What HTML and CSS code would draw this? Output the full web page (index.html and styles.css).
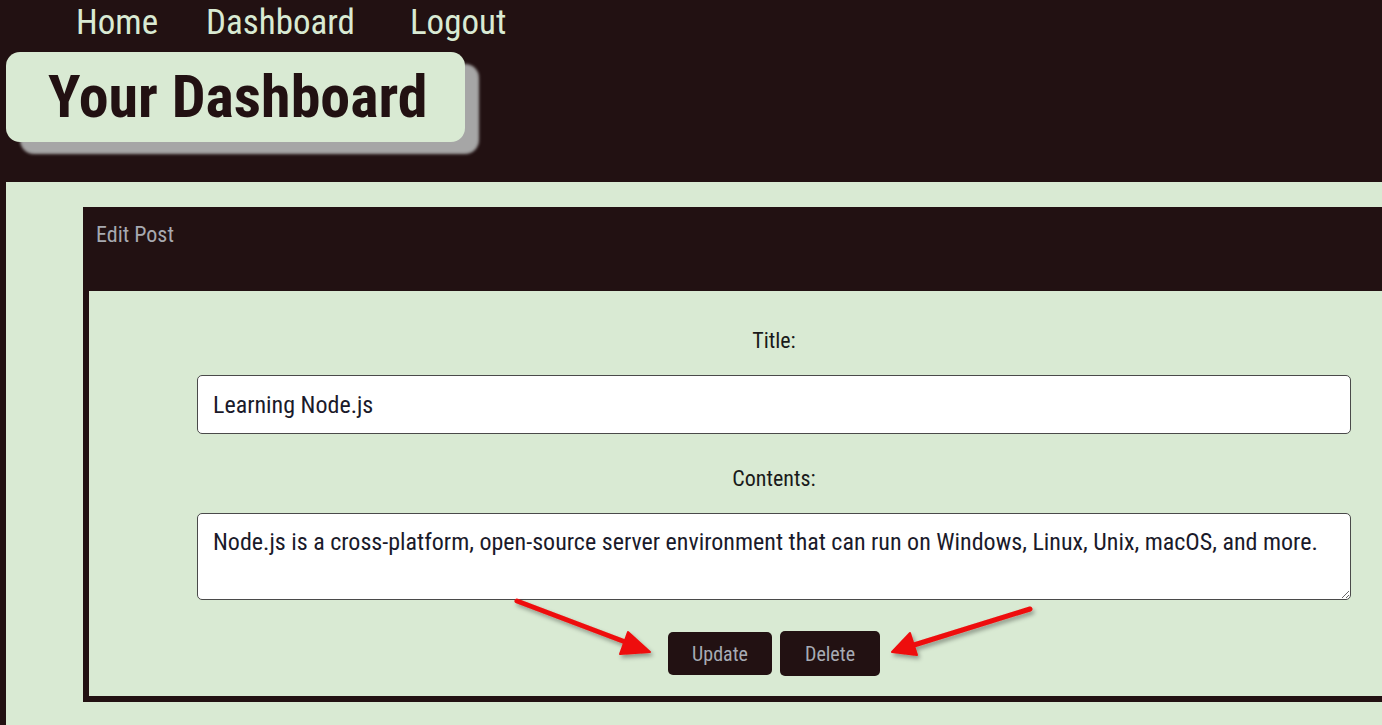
FILE: index.html
```html
<!DOCTYPE html>
<html lang="en">
<head>
<meta charset="utf-8">
<title>Your Dashboard</title>
<link rel="stylesheet" href="styles.css">
</head>
<body>
<header class="site-header">
  <nav class="nav">
    <a class="nav-link" href="#">Home</a>
    <a class="nav-link" href="#">Dashboard</a>
    <a class="nav-link nav-link-logout" href="#">Logout</a>
  </nav>
  <div class="title-box">
    <h1 class="page-title">Your Dashboard</h1>
  </div>
</header>
<main class="main">
  <section class="card">
    <div class="card-header">Edit Post</div>
    <form class="card-body">
      <label class="field-label" for="title">Title:</label>
      <input class="field-input" id="title" type="text" value="Learning Node.js">
      <label class="field-label field-label-contents" for="contents">Contents:</label>
      <textarea class="field-textarea" id="contents">Node.js is a cross-platform, open-source server environment that can run on Windows, Linux, Unix, macOS, and more.</textarea>
      <div class="actions">
        <button class="btn" type="button">Update</button>
        <button class="btn btn-delete" type="button">Delete</button>
      </div>
    </form>
  </section>
</main>
<svg class="annotations" width="1382" height="725" viewBox="0 0 1382 725">
  <defs>
    <filter id="sh" x="-20%" y="-20%" width="140%" height="140%">
      <feDropShadow dx="2" dy="3" stdDeviation="2" flood-color="#000" flood-opacity="0.35"/>
    </filter>
  </defs>
  <g filter="url(#sh)" fill="#ee0b0b" stroke="#ee0b0b" stroke-linecap="round" stroke-linejoin="round">
    <line x1="517" y1="601" x2="628" y2="643" stroke-width="5"/>
    <polygon points="650,652 628,632 620,654" stroke-width="2"/>
    <line x1="1030" y1="609" x2="914" y2="645" stroke-width="5"/>
    <polygon points="892,652 910,633 917,655" stroke-width="2"/>
  </g>
</svg>
</body>
</html>
```

FILE: styles.css
```css
html, body {
  margin: 0;
  padding: 0;
}

body {
  width: 1382px;
  height: 725px;
  overflow: hidden;
  background: #221112;
  font-family: "Roboto Condensed", "Liberation Sans Narrow", Roboto, sans-serif;
  font-stretch: condensed;
  position: relative;
}

.site-header {
  height: 182px;
  display: flex;
  flex-direction: column;
}

.nav {
  display: flex;
  padding-top: 3px;
  padding-left: 76px;
  height: 39px;
}

.nav-link {
  color: #d9ead3;
  text-decoration: none;
  font-size: 35px;
  line-height: 39px;
  margin-right: 48px;
}

.nav-link-logout {
  margin-left: 7px;
}

.title-box {
  margin-top: 10px;
  margin-left: 6px;
  width: 459px;
  height: 90px;
  box-sizing: border-box;
  background: #d9ead3;
  border-radius: 14px;
  box-shadow: 14px 12px 3px #a6a6a6;
  padding-left: 42px;
}

.page-title {
  margin: 0;
  font-size: 60px;
  font-weight: 700;
  line-height: 90px;
  color: #221112;
}

.main {
  margin-left: 6px;
  background: #d9ead3;
  height: 543px;
  padding-top: 25px;
  padding-left: 77px;
  box-sizing: border-box;
}

.card {
  width: 1386px;
  background: #221112;
  padding: 0 0 6px 6px;
  box-sizing: border-box;
  display: flex;
  flex-direction: column;
}

.card-header {
  height: 84px;
  margin-left: -6px;
  padding: 16px 0 0 13px;
  box-sizing: border-box;
  color: #a7a9b0;
  font-size: 22px;
  line-height: 24px;
}

.card-body {
  background: #d9ead3;
  height: 405px;
  box-sizing: border-box;
  padding-top: 38px;
  display: flex;
  flex-direction: column;
  align-items: center;
}

.field-label {
  display: block;
  width: 1154px;
  margin-left: -10px;
  text-align: center;
  font-size: 22px;
  line-height: 24px;
  color: #1a1a1a;
}

.field-input,
.field-textarea {
  display: block;
  width: 1154px;
  margin-left: -10px;
  box-sizing: border-box;
  border: 1px solid #4a4a4a;
  border-radius: 5px;
  background: #fff;
  font-family: inherit;
  font-stretch: condensed;
  font-size: 24px;
  color: #1a1a2a;
}

.field-input {
  height: 59px;
  margin-top: 22px;
  padding: 0 15px;
}

.field-label-contents {
  margin-top: 33px;
}

.field-textarea {
  height: 87px;
  margin-top: 22px;
  padding: 14px 15px;
  line-height: 28px;
  resize: vertical;
}

.actions {
  display: flex;
  gap: 8px;
  margin-top: 32px;
  margin-left: -10px;
}

.btn {
  height: 43px;
  width: 104px;
  background: #221112;
  color: #a7abb4;
  border: none;
  border-radius: 5px;
  font-family: inherit;
  font-stretch: condensed;
  font-size: 20px;
  cursor: pointer;
}

.btn-delete {
  width: 100px;
  height: 45px;
  margin-top: -1px;
}

.annotations {
  position: absolute;
  left: 0;
  top: 0;
  pointer-events: none;
}
```
